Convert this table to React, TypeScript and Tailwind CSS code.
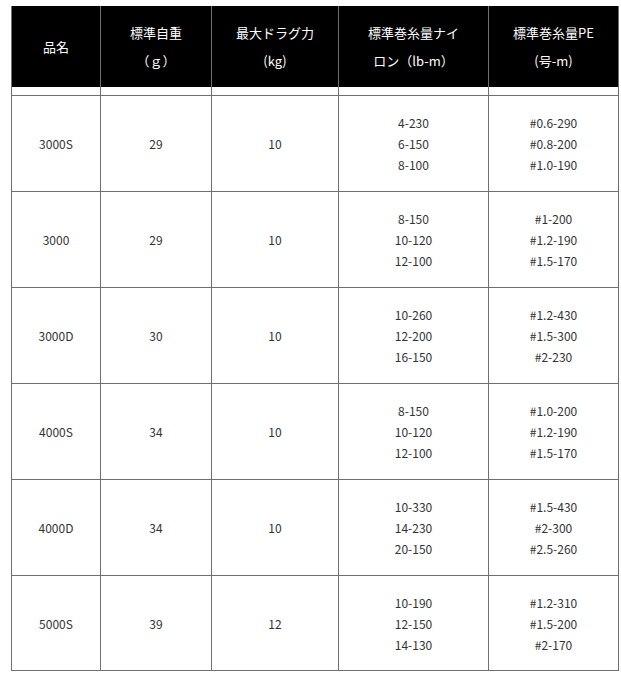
const rows = [
  { name: "3000S", weight: "29", drag: "10", nylon: ["4-230", "6-150", "8-100"], pe: ["#0.6-290", "#0.8-200", "#1.0-190"] },
  { name: "3000", weight: "29", drag: "10", nylon: ["8-150", "10-120", "12-100"], pe: ["#1-200", "#1.2-190", "#1.5-170"] },
  { name: "3000D", weight: "30", drag: "10", nylon: ["10-260", "12-200", "16-150"], pe: ["#1.2-430", "#1.5-300", "#2-230"] },
  { name: "4000S", weight: "34", drag: "10", nylon: ["8-150", "10-120", "12-100"], pe: ["#1.0-200", "#1.2-190", "#1.5-170"] },
  { name: "4000D", weight: "34", drag: "10", nylon: ["10-330", "14-230", "20-150"], pe: ["#1.5-430", "#2-300", "#2.5-260"] },
  { name: "5000S", weight: "39", drag: "12", nylon: ["10-190", "12-150", "14-130"], pe: ["#1.2-310", "#1.5-200", "#2-170"] },
];

const cols = "grid grid-cols-[90px_111px_127px_150px_130px]";
const cell = "flex flex-col items-center justify-center border-r border-[#707070] text-center";

export default function App() {
  return (
    <div className="min-h-[680px] bg-white pl-[11px] pt-[6px] font-['Noto_Sans_CJK_JP','Noto_Sans',sans-serif]">
      <div className="w-[608px]">
        <div className={`${cols} h-[81px] bg-black text-[13px] leading-[28px] text-white`}>
          <div className={`${cell} border-l`}>品名</div>
          <div className={cell}>
            <span>標準自重</span>
            <span>（ｇ）</span>
          </div>
          <div className={cell}>
            <span>最大ドラグ力</span>
            <span>(kg)</span>
          </div>
          <div className={cell}>
            <span>標準巻糸量ナイ</span>
            <span>ロン（lb-m）</span>
          </div>
          <div className={cell}>
            <span>標準巻糸量PE</span>
            <span>(号-m)</span>
          </div>
        </div>
        <div className={`${cols} h-[8px]`}>
          <div className={`${cell} border-l`} />
          <div className={cell} />
          <div className={cell} />
          <div className={cell} />
          <div className={cell} />
        </div>
        {rows.map((r, i) => (
          <div
            key={r.name}
            className={`${cols} border-t border-[#707070] text-[12px] leading-[21px] text-[#333] ${
              i === rows.length - 1 ? "h-[96px] border-b" : "h-[96px]"
            }`}
          >
            <div className={`${cell} border-l`}>{r.name}</div>
            <div className={cell}>{r.weight}</div>
            <div className={cell}>{r.drag}</div>
            <div className={cell}>
              {r.nylon.map((v) => (
                <span key={v}>{v}</span>
              ))}
            </div>
            <div className={cell}>
              {r.pe.map((v) => (
                <span key={v}>{v}</span>
              ))}
            </div>
          </div>
        ))}
      </div>
    </div>
  );
}
